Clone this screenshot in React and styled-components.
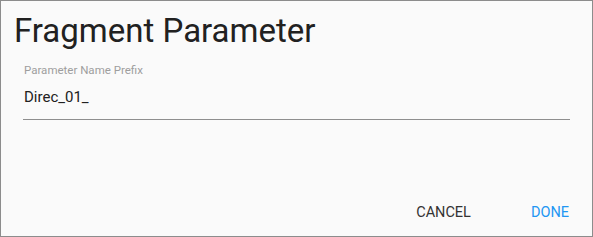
import React, { useState } from 'react';
import styled, { createGlobalStyle } from 'styled-components';

const GlobalStyle = createGlobalStyle`
  html, body {
    margin: 0;
    padding: 0;
    background: #ffffff;
  }
  * {
    box-sizing: border-box;
  }
`;

const Dialog = styled.div`
  width: 593px;
  height: 237px;
  border: 1px solid #8c8c8c;
  background: #fafafa;
  display: flex;
  flex-direction: column;
  font-family: Roboto, "Liberation Sans", sans-serif;
`;

const Title = styled.h2`
  margin: 0;
  padding: 12px 0 0 13px;
  font-size: 33px;
  line-height: 36px;
  font-weight: 400;
  color: #212121;
`;

const Field = styled.label`
  display: flex;
  flex-direction: column;
  margin: 15px 22px 0 22px;
  border-bottom: 1px solid #8e8e8e;
  padding-bottom: 13px;
`;

const FieldLabel = styled.span`
  font-size: 11.5px;
  line-height: 13px;
  color: #9e9e9e;
  padding-left: 1px;
`;

const TextInput = styled.input`
  margin-top: 11px;
  border: none;
  outline: none;
  background: transparent;
  padding: 0 0 0 1px;
  font-family: inherit;
  font-size: 15px;
  line-height: 18px;
  color: #212121;
`;

const Actions = styled.div`
  margin-top: auto;
  display: flex;
  justify-content: flex-end;
  align-items: center;
  gap: 60px;
  padding: 0 23px 15px 0;
`;

const ActionButton = styled.button`
  border: none;
  background: transparent;
  padding: 0;
  font-family: inherit;
  font-size: 14.5px;
  line-height: 16px;
  text-transform: uppercase;
  color: ${(p) => (p.$primary ? '#2196f3' : '#333333')};
  cursor: pointer;
`;

export default function App() {
  const [prefix, setPrefix] = useState('Direc_01_');

  return (
    <>
      <GlobalStyle />
      <Dialog>
        <Title>Fragment Parameter</Title>
        <Field>
          <FieldLabel>Parameter Name Prefix</FieldLabel>
          <TextInput value={prefix} onChange={(e) => setPrefix(e.target.value)} />
        </Field>
        <Actions>
          <ActionButton>Cancel</ActionButton>
          <ActionButton $primary>Done</ActionButton>
        </Actions>
      </Dialog>
    </>
  );
}
